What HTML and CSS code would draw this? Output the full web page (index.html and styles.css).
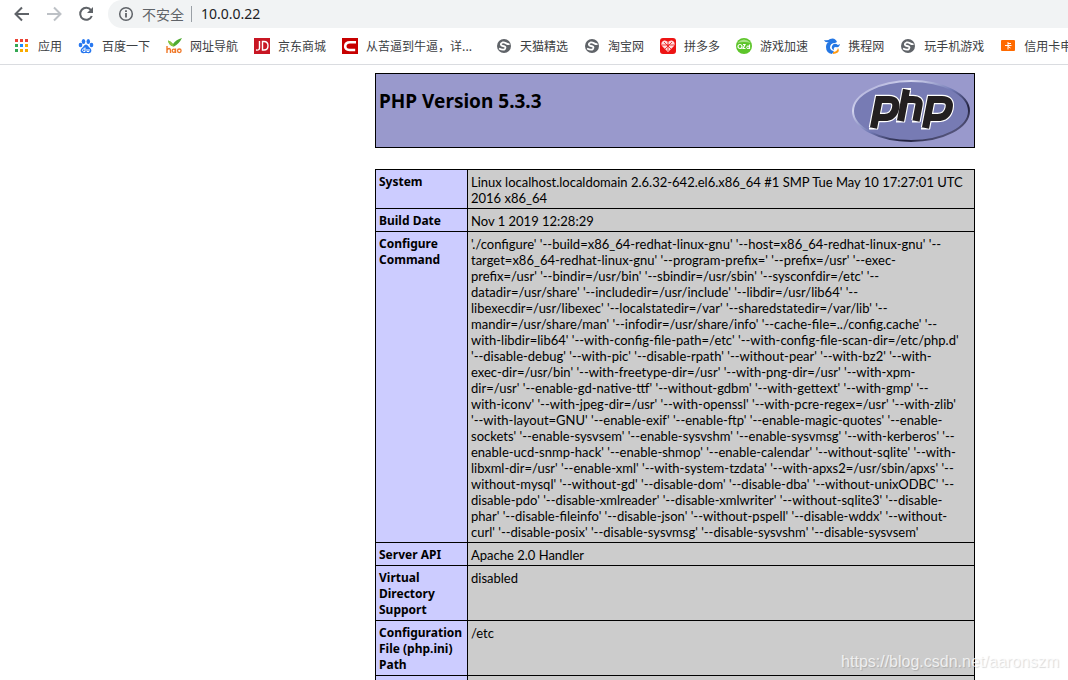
FILE: index.html
```html
<!DOCTYPE html>
<html lang="zh-CN">
<head>
<meta charset="utf-8">
<title>phpinfo()</title>
<link rel="stylesheet" href="styles.css">
</head>
<body>
<svg class="defs" aria-hidden="true">
  <symbol id="globe" viewBox="0 0 16 16">
    <circle cx="8" cy="8" r="7" fill="#5f6368"/>
    <path d="M13.500 6C11 7 9.500 3.800 6.500 4.500C3.800 5.500 4.500 7.800 7 8C9.500 8.200 10 9.500 9 10.800C8 12 6 12 3 10.500" fill="none" stroke="#fff" stroke-width="1.800"/>
  </symbol>
</svg>
<header class="browser">
  <div class="toolbar">
    <button class="nav" type="button" aria-label="后退"><svg viewBox="0 0 16 16"><path d="M15 8H2M8 1.500L1.500 8L8 14.500" fill="none" stroke="#5f6368" stroke-width="2"/></svg></button>
    <button class="nav" type="button" aria-label="前进"><svg viewBox="0 0 16 16"><path d="M1 8H14M8 1.500L14.500 8L8 14.500" fill="none" stroke="#bdc1c6" stroke-width="2"/></svg></button>
    <button class="nav" type="button" aria-label="重新加载"><svg viewBox="0 0 16 16"><path d="M13 4.200A6 6 0 1 0 13.800 10" fill="none" stroke="#5f6368" stroke-width="2"/><path d="M15 1V7H9Z" fill="#5f6368"/></svg></button>
    <div class="omnibox">
      <svg class="info" viewBox="0 0 16 16"><circle cx="8" cy="8" r="6.300" fill="none" stroke="#5f6368" stroke-width="1.500"/><path d="M8 7V11.500M8 4.300V6" stroke="#5f6368" stroke-width="1.800"/></svg>
      <span class="insecure">不安全</span>
      <input class="address" type="text" aria-label="地址" value="10.0.0.22">
    </div>
  </div>
  <nav class="bookmarks">
    <a href="#"><svg viewBox="0 0 16 16"><path d="M1 1h3v3H1zM6 1h3v3H6zM11 1h3v3h-3z" fill="#ea4335"/><path d="M1 6h3v3H1zM1 11h3v3H1z" fill="#34a853"/><path d="M6 6h3v3H6z" fill="#1a8cff"/><path d="M11 6h3v3h-3zM6 11h3v3H6zM11 11h3v3h-3z" fill="#f9ab00"/></svg><span>应用</span></a>
    <a href="#"><svg viewBox="0 0 16 16"><g fill="#2878f0"><ellipse cx="5.500" cy="3.500" rx="1.800" ry="2.500"/><ellipse cx="10.300" cy="3.500" rx="1.800" ry="2.500"/><ellipse cx="2.500" cy="7" rx="1.800" ry="2.300"/><ellipse cx="13.500" cy="7" rx="1.800" ry="2.300"/><path d="M8 6.500C10 6.500 10.500 9 12.300 10.300C14.500 12.500 13 15.500 10.500 15.200C9 14.900 7 14.900 5.500 15.200C3 15.500 1.500 12.500 3.700 10.300C5.500 9 6 6.500 8 6.500Z"/></g><path d="M7 9.500V13.500H5.500A1.300 1.300 0 0 1 5.500 11H7M9 11V13.500H11V11" fill="none" stroke="#fff"/></svg><span>百度一下</span></a>
    <a href="#"><svg viewBox="0 0 16 16"><path d="M2 2.500Q5 3 7 6Q10 1.500 16 0Q13 6 8 8.500Q3 8 2 2.500Z" fill="#4eab32"/><path d="M2 2.500Q5 3 7 6L8 8.500Q3 8 2 2.500Z" fill="#8cc63f"/><path d="M1 8V15M1 12Q3.500 9 4.500 12V15M9.500 10.500V15" fill="none" stroke="#f07828" stroke-width="1.400"/><circle cx="7.800" cy="12.800" r="1.600" fill="none" stroke="#f07828" stroke-width="1.300"/><circle cx="13.300" cy="12.800" r="1.800" fill="none" stroke="#f07828" stroke-width="1.300"/></svg><span>网址导航</span></a>
    <a href="#"><svg viewBox="0 0 16 16"><path d="M0 0h16v16H0z" fill="#c81623"/><path d="M5.500 3V10Q5.500 12.500 2 12M8.500 3.500V12H10Q14 12 14 7.700Q14 3.500 10 3.500Z" fill="none" stroke="#fff" stroke-width="1.400"/></svg><span>京东商城</span></a>
    <a class="long" href="#"><svg viewBox="0 0 16 16"><path d="M0 0h16v16H0z" fill="#c70000"/><path d="M14 4.200H8Q3.500 4.200 3.200 8T7.500 12H13.200" fill="none" stroke="#fff" stroke-width="2.600"/></svg><span>从苦逼到牛逼，详...</span></a>
    <a href="#"><svg><use href="#globe"/></svg><span>天猫精选</span></a>
    <a href="#"><svg><use href="#globe"/></svg><span>淘宝网</span></a>
    <a href="#"><svg viewBox="0 0 16 16"><rect width="16" height="16" rx="3" fill="#ed1414"/><path d="M8 14L2 8Q0 4 4 2.500Q6 2 8 4Q10 2 12 2.500Q16 4 14 8Z" fill="#ffdede"/><path d="M4 4L11 11M12 4L5 11M2 7H14M8 4V13" stroke="#ed1414" stroke-width=".8"/></svg><span>拼多多</span></a>
    <a href="#"><svg viewBox="0 0 16 16"><circle cx="8" cy="8" r="8" fill="#5dc52a"/><path d="M1 5Q8-2 15 5Q8 3 1 5Z" fill="#a8e286"/><circle cx="4" cy="8.500" r="2" fill="none" stroke="#fff" stroke-width="1.200"/><path d="M7 6.500H9L7 10.500H9.500M13.500 6.500V11" fill="none" stroke="#fff" stroke-width="1.200"/><circle cx="12" cy="9.300" r="1.300" fill="none" stroke="#fff"/></svg><span>游戏加速</span></a>
    <a href="#"><svg viewBox="0 0 16 16"><path d="M0 2Q4 3 6 1Q11-1 13 4L11 5Q6 5 6 10Q7 13 10 13L8 16Q2 15 2 9Q2 5 5 4Q1 5 0 2Z" fill="#2577e3"/><path d="M8 8Q10 4 14 7L16 6Q15 10 12 9Q9 9 10 12Q7 11 8 8Z" fill="#2577e3"/><path d="M9 14Q13 14 14 10Q17 15 9 16Z" fill="#ff9a14"/></svg><span>携程网</span></a>
    <a href="#"><svg><use href="#globe"/></svg><span>玩手机游戏</span></a>
    <a href="#"><svg viewBox="0 0 16 16"><rect x="1" y="2" width="14" height="11" rx="1" fill="#ff6a00"/><path d="M8 4V11.500M8 5.500H11M5 7.500H11.500M8 8.500L10.500 10" stroke="#fff"/></svg><span>信用卡申</span></a>
  </nav>
</header>
<main class="page">
  <section class="banner">
    <h1>PHP Version 5.3.3</h1>
    <svg class="logo" viewBox="0 0 120 67" role="img" aria-label="php">
      <defs>
        <linearGradient id="rim" x1="0" y1="0" x2="1" y2="1"><stop offset="0" stop-color="#9999cc"/><stop offset=".25" stop-color="#d2d4ee"/><stop offset=".5" stop-color="#7078b4"/><stop offset=".72" stop-color="#20203c"/><stop offset="1" stop-color="#8888bb"/></linearGradient>
        <g id="mark">
          <path d="M22.500 51L28 22.500H38Q46.500 22.500 44.500 31.500Q42.500 40.500 33.500 40.500H26"/>
          <path d="M55.500 12.500L49.500 44M54 22.500H62Q69 22.500 68 28L65 44"/>
          <path d="M74.500 51L80 22.500H91Q100 22.500 98 31.500Q96 40.500 86.500 40.500H78"/>
        </g>
      </defs>
      <ellipse cx="60" cy="34" rx="58" ry="30" fill="#777bb4" stroke="url(#rim)" stroke-width="2"/>
      <g fill="none">
        <use href="#mark" stroke="#fff" stroke-width="9.500"/>
        <path d="M18 51.500H27M45 44.500H54M61 44.500H69M70 51.500H79M51 12H60" stroke="#fff" stroke-width="2"/>
        <use href="#mark" stroke="#231f20" stroke-width="7.200"/>
      </g>
    </svg>
  </section>
  <table class="info-table">
    <tbody>
      <tr><th scope="row">System</th><td>Linux localhost.localdomain 2.6.32-642.el6.x86_64 #1 SMP Tue May 10 17:27:01 UTC<br>2016 x86_64</td></tr>
      <tr><th scope="row">Build Date</th><td>Nov 1 2019 12:28:29</td></tr>
      <tr><th scope="row">Configure<br>Command</th><td>'./configure' '--build=x86_64-redhat-linux-gnu' '--host=x86_64-redhat-linux-gnu' '--<br>target=x86_64-redhat-linux-gnu' '--program-prefix=' '--prefix=/usr' '--exec-<br>prefix=/usr' '--bindir=/usr/bin' '--sbindir=/usr/sbin' '--sysconfdir=/etc' '--<br>datadir=/usr/share' '--includedir=/usr/include' '--libdir=/usr/lib64' '--<br>libexecdir=/usr/libexec' '--localstatedir=/var' '--sharedstatedir=/var/lib' '--<br>mandir=/usr/share/man' '--infodir=/usr/share/info' '--cache-file=../config.cache' '--<br>with-libdir=lib64' '--with-config-file-path=/etc' '--with-config-file-scan-dir=/etc/php.d'<br>'--disable-debug' '--with-pic' '--disable-rpath' '--without-pear' '--with-bz2' '--with-<br>exec-dir=/usr/bin' '--with-freetype-dir=/usr' '--with-png-dir=/usr' '--with-xpm-<br>dir=/usr' '--enable-gd-native-ttf' '--without-gdbm' '--with-gettext' '--with-gmp' '--<br>with-iconv' '--with-jpeg-dir=/usr' '--with-openssl' '--with-pcre-regex=/usr' '--with-zlib'<br>'--with-layout=GNU' '--enable-exif' '--enable-ftp' '--enable-magic-quotes' '--enable-<br>sockets' '--enable-sysvsem' '--enable-sysvshm' '--enable-sysvmsg' '--with-kerberos' '--<br>enable-ucd-snmp-hack' '--enable-shmop' '--enable-calendar' '--without-sqlite' '--with-<br>libxml-dir=/usr' '--enable-xml' '--with-system-tzdata' '--with-apxs2=/usr/sbin/apxs' '--<br>without-mysql' '--without-gd' '--disable-dom' '--disable-dba' '--without-unixODBC' '--<br>disable-pdo' '--disable-xmlreader' '--disable-xmlwriter' '--without-sqlite3' '--disable-<br>phar' '--disable-fileinfo' '--disable-json' '--without-pspell' '--disable-wddx' '--without-<br>curl' '--disable-posix' '--disable-sysvmsg' '--disable-sysvshm' '--disable-sysvsem'</td></tr>
      <tr><th scope="row">Server API</th><td>Apache 2.0 Handler</td></tr>
      <tr><th scope="row">Virtual<br>Directory<br>Support</th><td>disabled</td></tr>
      <tr><th scope="row">Configuration<br>File (php.ini)<br>Path</th><td>/etc</td></tr>
      <tr><th scope="row">&nbsp;</th><td>&nbsp;</td></tr>
    </tbody>
  </table>
</main>
<div class="watermark">https://blog.csdn.net/aaronszm</div>
</body>
</html>
```
FILE: styles.css
```css
* { box-sizing: border-box; }
html { height: 100%; overflow: hidden; }
body {
  margin: 0;
  height: 100%;
  overflow: hidden;
  background: #fff;
  color: #000;
  font: 12px/16px "Noto Sans", "Noto Sans CJK SC", sans-serif;
}
.defs { position: absolute; width: 0; height: 0; }
.browser { border-bottom: 1px solid #dadce0; }
.toolbar { display: flex; align-items: center; height: 28px; padding-left: 14px; gap: 16px; }
.nav { display: flex; width: 16px; height: 16px; padding: 0; border: 0; background: none; }
.nav svg { width: 16px; height: 16px; }
.omnibox {
  display: flex;
  flex: 1;
  align-items: center;
  height: 28px;
  margin-left: -2px;
  padding-left: 10px;
  border-radius: 14px 0 0 14px;
  background: #f1f3f4;
  font-size: 14px;
}
.info { width: 16px; height: 16px; margin-right: 8px; }
.insecure {
  padding-right: 7px;
  border-right: 1px solid #9aa0a6;
  color: #5f6368;
  font-family: "Noto Sans CJK SC", sans-serif;
}
.address {
  flex: 1;
  min-width: 0;
  padding: 0 0 0 9px;
  border: 0;
  background: none;
  color: #202124;
  font: 14px/20px "Noto Sans", sans-serif;
}
.bookmarks {
  display: flex;
  align-items: center;
  gap: 16px;
  height: 36px;
  padding-left: 14px;
  overflow: hidden;
  font-family: "Noto Sans CJK SC", sans-serif;
}
.bookmarks a {
  display: flex;
  flex: none;
  align-items: center;
  gap: 8px;
  color: #3c4043;
  text-decoration: none;
  white-space: nowrap;
}
.bookmarks svg { width: 16px; height: 16px; }
.bookmarks .long span { width: 114px; }
.page { width: 975px; padding: 8px 0 0 375px; }
.banner {
  display: flex;
  align-items: flex-start;
  justify-content: space-between;
  margin-bottom: 21px;
  padding: 3px;
  border: 1px solid #000;
  background: #99c;
}
.banner h1 { margin: 12px 0 0; font-size: 19px; line-height: 24px; }
.logo { width: 120px; height: 67px; }
.info-table { width: 100%; border-collapse: collapse; table-layout: fixed; }
.info-table th, .info-table td {
  padding: 4px 3px 2px;
  border: 1px solid #000;
  text-align: left;
  vertical-align: top;
  white-space: nowrap;
}
.info-table th { width: 92px; background: #ccf; }
.info-table td { background: #ccc; font-family: Lato, sans-serif; font-size: 13px; }
.watermark {
  position: absolute;
  right: 9px;
  bottom: 8px;
  color: rgba(255, 255, 255, .75);
  font: 16px/20px "Liberation Sans", sans-serif;
  text-shadow: 1px 1px 1px rgba(0, 0, 0, .15);
}
```
